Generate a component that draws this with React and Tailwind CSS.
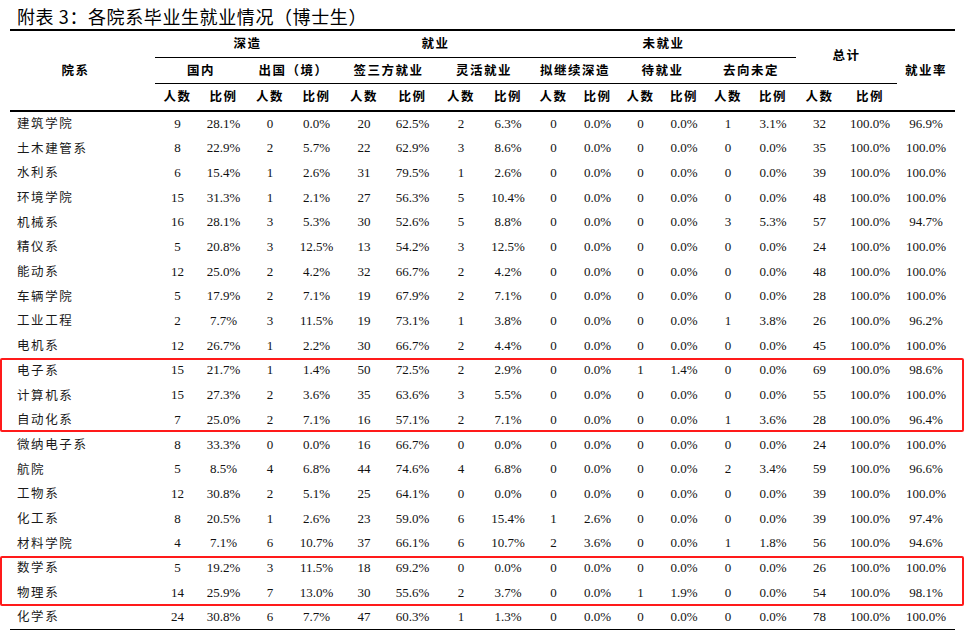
import React from "react";

const ROWS = [
  ["建筑学院", 9, "28.1%", 0, "0.0%", 20, "62.5%", 2, "6.3%", 0, "0.0%", 0, "0.0%", 1, "3.1%", 32, "100.0%", "96.9%"],
  ["土木建管系", 8, "22.9%", 2, "5.7%", 22, "62.9%", 3, "8.6%", 0, "0.0%", 0, "0.0%", 0, "0.0%", 35, "100.0%", "100.0%"],
  ["水利系", 6, "15.4%", 1, "2.6%", 31, "79.5%", 1, "2.6%", 0, "0.0%", 0, "0.0%", 0, "0.0%", 39, "100.0%", "100.0%"],
  ["环境学院", 15, "31.3%", 1, "2.1%", 27, "56.3%", 5, "10.4%", 0, "0.0%", 0, "0.0%", 0, "0.0%", 48, "100.0%", "100.0%"],
  ["机械系", 16, "28.1%", 3, "5.3%", 30, "52.6%", 5, "8.8%", 0, "0.0%", 0, "0.0%", 3, "5.3%", 57, "100.0%", "94.7%"],
  ["精仪系", 5, "20.8%", 3, "12.5%", 13, "54.2%", 3, "12.5%", 0, "0.0%", 0, "0.0%", 0, "0.0%", 24, "100.0%", "100.0%"],
  ["能动系", 12, "25.0%", 2, "4.2%", 32, "66.7%", 2, "4.2%", 0, "0.0%", 0, "0.0%", 0, "0.0%", 48, "100.0%", "100.0%"],
  ["车辆学院", 5, "17.9%", 2, "7.1%", 19, "67.9%", 2, "7.1%", 0, "0.0%", 0, "0.0%", 0, "0.0%", 28, "100.0%", "100.0%"],
  ["工业工程", 2, "7.7%", 3, "11.5%", 19, "73.1%", 1, "3.8%", 0, "0.0%", 0, "0.0%", 1, "3.8%", 26, "100.0%", "96.2%"],
  ["电机系", 12, "26.7%", 1, "2.2%", 30, "66.7%", 2, "4.4%", 0, "0.0%", 0, "0.0%", 0, "0.0%", 45, "100.0%", "100.0%"],
  ["电子系", 15, "21.7%", 1, "1.4%", 50, "72.5%", 2, "2.9%", 0, "0.0%", 1, "1.4%", 0, "0.0%", 69, "100.0%", "98.6%"],
  ["计算机系", 15, "27.3%", 2, "3.6%", 35, "63.6%", 3, "5.5%", 0, "0.0%", 0, "0.0%", 0, "0.0%", 55, "100.0%", "100.0%"],
  ["自动化系", 7, "25.0%", 2, "7.1%", 16, "57.1%", 2, "7.1%", 0, "0.0%", 0, "0.0%", 1, "3.6%", 28, "100.0%", "96.4%"],
  ["微纳电子系", 8, "33.3%", 0, "0.0%", 16, "66.7%", 0, "0.0%", 0, "0.0%", 0, "0.0%", 0, "0.0%", 24, "100.0%", "100.0%"],
  ["航院", 5, "8.5%", 4, "6.8%", 44, "74.6%", 4, "6.8%", 0, "0.0%", 0, "0.0%", 2, "3.4%", 59, "100.0%", "96.6%"],
  ["工物系", 12, "30.8%", 2, "5.1%", 25, "64.1%", 0, "0.0%", 0, "0.0%", 0, "0.0%", 0, "0.0%", 39, "100.0%", "100.0%"],
  ["化工系", 8, "20.5%", 1, "2.6%", 23, "59.0%", 6, "15.4%", 1, "2.6%", 0, "0.0%", 0, "0.0%", 39, "100.0%", "97.4%"],
  ["材料学院", 4, "7.1%", 6, "10.7%", 37, "66.1%", 6, "10.7%", 2, "3.6%", 0, "0.0%", 1, "1.8%", 56, "100.0%", "94.6%"],
  ["数学系", 5, "19.2%", 3, "11.5%", 18, "69.2%", 0, "0.0%", 0, "0.0%", 0, "0.0%", 0, "0.0%", 26, "100.0%", "100.0%"],
  ["物理系", 14, "25.9%", 7, "13.0%", 30, "55.6%", 2, "3.7%", 0, "0.0%", 1, "1.9%", 0, "0.0%", 54, "100.0%", "98.1%"],
  ["化学系", 24, "30.8%", 6, "7.7%", 47, "60.3%", 1, "1.3%", 0, "0.0%", 0, "0.0%", 0, "0.0%", 78, "100.0%", "100.0%"],
];

// widths of the 18 columns, px
const COLS = [145, 45, 47, 46, 47, 48, 49, 48, 46, 45, 43, 43, 44, 44, 46, 47, 54, 58];

const SUBS = ["国内", "出国（境）", "签三方就业", "灵活就业", "拟继续深造", "待就业", "去向未定"];

const head = "font-bold text-[12.5px] tracking-[1.5px] text-black";

export default function App() {
  return (
    <div className="w-[965px] h-[636px] bg-white overflow-hidden" style={{ fontFamily: '"Liberation Serif", "Noto Sans CJK SC", serif' }}>
      <div
        className="h-[29px] pl-[17px] pt-[3px] text-[18px] tracking-[0.6px] leading-[26px] text-black"
        style={{ fontFamily: '"Noto Sans CJK SC", "Liberation Sans", sans-serif' }}
      >
        附表 3：各院系毕业生就业情况（博士生）
      </div>

      <div className="relative ml-[10px] w-[945px]">
        <table className="table-fixed border-collapse w-[945px] border-t-[2px] border-b border-black">
          <colgroup>
            {COLS.map((w, i) => (
              <col key={i} style={{ width: w }} />
            ))}
          </colgroup>
          <thead style={{ fontFamily: '"Noto Sans CJK SC", sans-serif' }}>
            <tr className="h-[27px]">
              <th rowSpan={3} className={`${head} pr-[14px] border-b-[2px] border-black`}>院系</th>
              <th colSpan={4} className={`${head} border-b-[1.5px] border-black`}>深造</th>
              <th colSpan={4} className={`${head} border-b-[1.5px] border-black`}>就业</th>
              <th colSpan={6} className={`${head} border-b-[1.5px] border-black`}>未就业</th>
              <th colSpan={2} rowSpan={2} className={`${head} pb-[3px] border-b-[1.5px] border-black`}>总计</th>
              <th rowSpan={3} className={`${head} border-b-[2px] border-black`}>就业率</th>
            </tr>
            <tr className="h-[26px]">
              {SUBS.map((s) => (
                <th key={s} colSpan={2} className={`${head} border-b-[1.5px] border-black`}>{s}</th>
              ))}
            </tr>
            <tr className="h-[28px]">
              {Array.from({ length: 16 }).map((_, i) => (
                <th key={i} className={`${head} border-b-[2px] border-black`}>{i % 2 === 0 ? "人数" : "比例"}</th>
              ))}
            </tr>
          </thead>
          <tbody>
            {ROWS.map((r) => (
              <tr key={r[0]} className="h-[24.7px]">
                <td
                  className="pl-[7px] text-[12.5px] tracking-[1.6px] text-[#1a1a1a]"
                  style={{ fontFamily: '"Noto Sans CJK SC", sans-serif' }}
                >
                  {r[0]}
                </td>
                {r.slice(1).map((v, i) => (
                  <td key={i} className="text-center text-[13px] text-[#111]">{v}</td>
                ))}
              </tr>
            ))}
          </tbody>
        </table>

        {/* red highlight boxes */}
        <div className="absolute left-[-10px] w-[964px] top-[329px] h-[74px] border-[2.5px] border-[#ff1a1a] rounded-[2px]" />
        <div className="absolute left-[-10px] w-[964px] top-[527px] h-[50px] border-[2.5px] border-[#ff1a1a] rounded-[2px]" />
      </div>
    </div>
  );
}
